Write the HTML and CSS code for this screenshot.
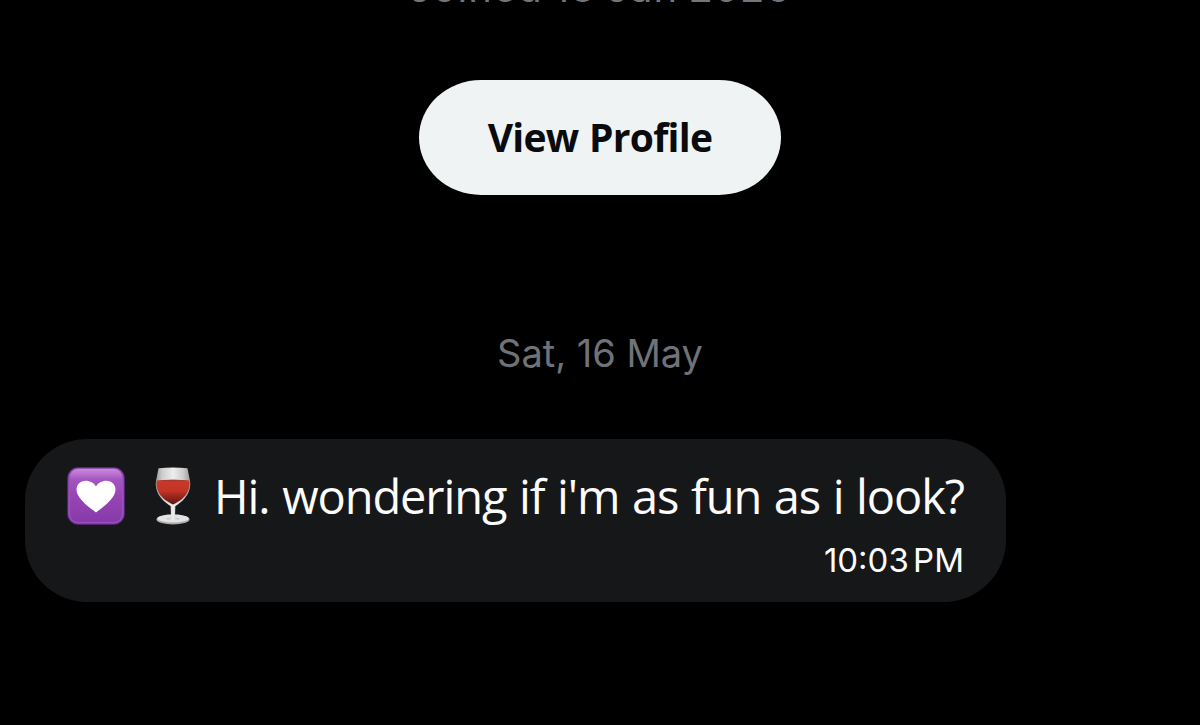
FILE: index.html
```html
<!DOCTYPE html>
<html lang="en">
<head>
    <meta charset="UTF-8">
    <meta name="viewport" content="width=device-width, initial-scale=1.0">
    <title>Messages</title>
    <link rel="stylesheet" href="styles.css">
</head>
<body>
    <div class="profile">
        <div class="joined">Joined 13 Jan 2026</div>
        <button class="view-profile">View Profile</button>
    </div>
    <div class="date">Sat, 16 May</div>
    <div class="message">
        <div class="message-text">
            <svg class="heart" viewBox="0 0 58 58" role="img" aria-label="Purple heart">
                <defs>
                    <linearGradient id="purple" x1="0" y1="0" x2="0" y2="1">
                        <stop offset="0" stop-color="#c78bdc"/>
                        <stop offset="0.2" stop-color="#a455c0"/>
                        <stop offset="0.5" stop-color="#9746b3"/>
                        <stop offset="1" stop-color="#873aaa"/>
                    </linearGradient>
                </defs>
                <rect x="0.3" y="0.3" width="57.4" height="57.4" rx="10.500" fill="#6f2b96"/>
                <rect x="1.3" y="1" width="55.4" height="55.4" rx="10" fill="#9a52b8"/>
                <rect x="3" y="2" width="52" height="53" rx="8" fill="url(#purple)"/>
                <path d="M29 45.500C21 39.500 9.500 31 9.500 22.500C9.500 17.500 13.500 13.800 18.500 13.800C23 13.800 27 16 29 19.500C31 16 35 13.800 39.500 13.800C44.500 13.800 48.500 17.500 48.500 22.500C48.500 31 37 39.500 29 45.500Z" fill="#fff"/>
            </svg>
            <svg class="wine" viewBox="0 0 36 58" role="img" aria-label="Wine glass">
                <defs>
                    <linearGradient id="glass" x1="0" y1="0" x2="1" y2="0">
                        <stop offset="0" stop-color="#999"/>
                        <stop offset="0.18" stop-color="#ccc"/>
                        <stop offset="0.5" stop-color="#eee"/>
                        <stop offset="0.8" stop-color="#ccc"/>
                        <stop offset="1" stop-color="#999"/>
                    </linearGradient>
                    <linearGradient id="red" x1="0" y1="0" x2="0" y2="1">
                        <stop offset="0" stop-color="#c93a29"/>
                        <stop offset="0.45" stop-color="#c23425"/>
                        <stop offset="1" stop-color="#5d1412"/>
                    </linearGradient>
                </defs>
                <ellipse cx="18" cy="52.500" rx="16.500" ry="5" fill="#aaa"/>
                <ellipse cx="18" cy="51.500" rx="15.800" ry="4" fill="#e3e3e3"/>
                <path d="M15.500 35H20.500L20 49Q21 51 25 52Q18 54 11 52Q15 51 16 49Z" fill="url(#glass)"/>
                <path d="M3.500 1.200Q18 -0.200 32.500 1.200L35 14C37 27 27 35 20.500 39H15.500C9 35 -1 27 1 14Z" fill="url(#glass)"/>
                <path d="M1.800 13.500Q18 12 34.200 13.500C36 26 27 33.500 18 37.500C9 33.500 0 26 1.800 13.500Z" fill="url(#red)"/>
                <path d="M2.300 13.500Q18 12 33.700 13.500Q18 15.500 2.300 13.500Z" fill="#a9382f"/>
            </svg>
            <span>Hi. wondering if i'm as fun as i look?</span>
        </div>
        <div class="time">10:03 PM</div>
    </div>
</body>
</html>
```
FILE: styles.css
```css
body {
    margin: 0;
    height: 725px;
    overflow: hidden;
    background-color: #000;
    font-family: Inter, "Liberation Sans", sans-serif;
}
.profile {
    display: flex;
    flex-direction: column;
    align-items: center;
}
.joined {
    margin-top: -36px;
    height: 48px;
    line-height: 48px;
    font-size: 40px;
    letter-spacing: 1px;
    word-spacing: -2px;
    color: #71767b;
    white-space: nowrap;
}
.view-profile {
    margin-top: 68px;
    width: 362px;
    height: 115px;
    padding: 0 0 2px;
    border: none;
    border-radius: 62px / 57.5px;
    background-color: #eff3f4;
    color: #090b0e;
    font-family: "Open Sans", sans-serif;
    font-size: 39px;
    font-weight: 700;
    letter-spacing: -0.7px;
    word-spacing: 1px;
    cursor: pointer;
}
.date {
    margin-top: 133px;
    height: 50px;
    line-height: 50px;
    text-align: center;
    font-size: 38px;
    color: #70727a;
}
.message {
    box-sizing: border-box;
    width: 981px;
    height: 163px;
    margin: 61px 0 0 25px;
    padding: 25px 42px 0;
    border-radius: 62px;
    background-color: #161719;
    color: #fcfcfd;
}
.message-text {
    display: flex;
    align-items: center;
    height: 64px;
    font-family: "Open Sans", sans-serif;
    font-size: 47px;
    letter-spacing: -1.1px;
    word-spacing: 1.5px;
    white-space: nowrap;
}
.heart {
    flex: none;
    width: 58px;
    height: 58px;
}
.wine {
    flex: none;
    width: 36px;
    height: 58px;
    margin: 0 23px 0 30px;
}
.time {
    margin-top: 12px;
    line-height: 40px;
    text-align: right;
    font-size: 33px;
    word-spacing: -5px;
}
```
